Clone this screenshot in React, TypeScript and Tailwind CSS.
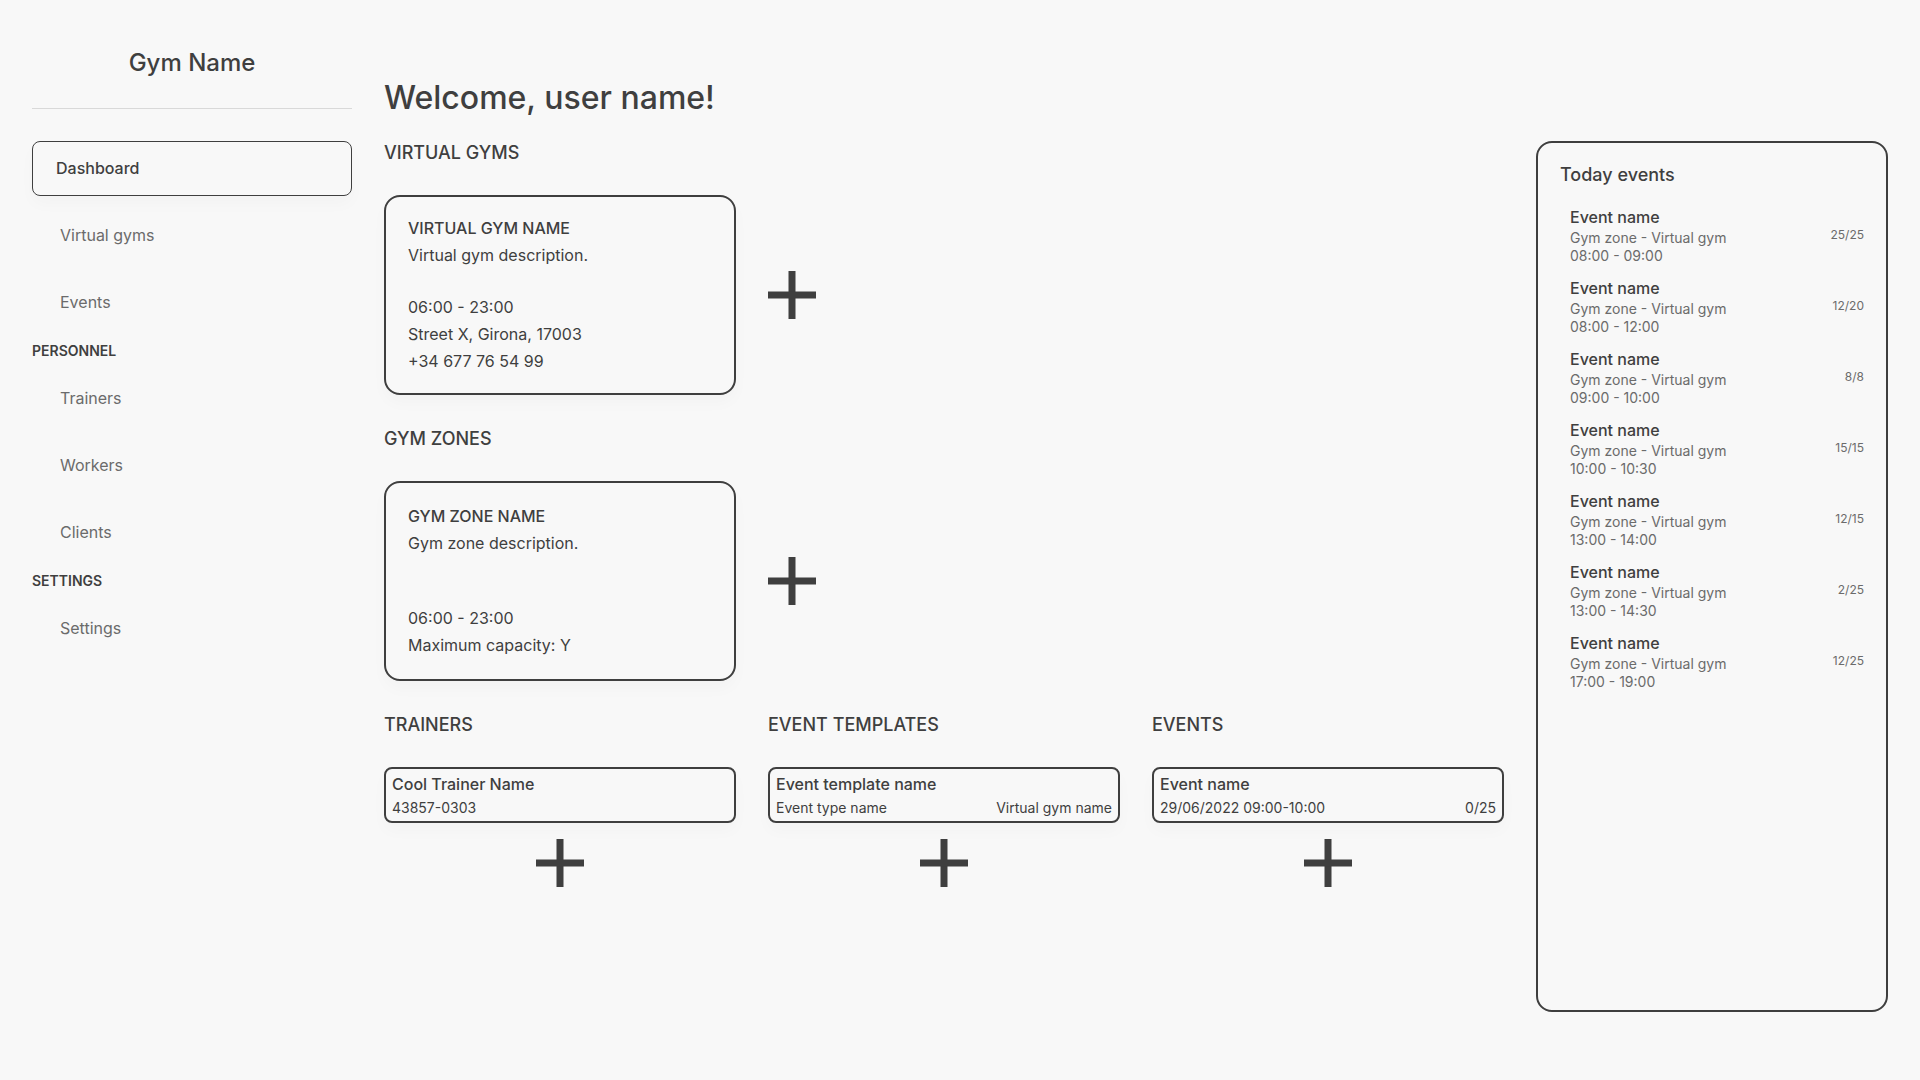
import type { ReactNode } from "react";

const shadow = "shadow-[0_8px_16px_rgba(0,0,0,0.025)]";

function Plus({ label }: { label: string }) {
  return (
    <button type="button" aria-label={label} className="size-12 shrink-0 cursor-pointer">
      <svg viewBox="0 0 48 48" className="size-12" fill="#3f3f3f" aria-hidden="true">
        <rect x="20.5" y="0" width="7" height="48" />
        <rect x="0" y="20.5" width="48" height="7" />
      </svg>
    </button>
  );
}

function NavItem({ children, active = false }: { children: ReactNode; active?: boolean }) {
  return (
    <a
      href="#"
      aria-current={active ? "page" : undefined}
      className={
        active
          ? `flex h-[55px] items-center rounded-lg border border-[#3f3f3f] px-[23px] font-medium ${shadow}`
          : "flex h-[55px] items-center px-7 text-[#6b6b6b]"
      }
    >
      {children}
    </a>
  );
}

function NavHeading({ children }: { children: ReactNode }) {
  return <h2 className="text-sm leading-[17px] font-semibold">{children}</h2>;
}

function SectionTitle({ children }: { children: ReactNode }) {
  return <h2 className="text-lg leading-6 font-medium">{children}</h2>;
}

function InfoCard({
  name,
  description,
  details,
  gap,
}: {
  name: string;
  description: string;
  details: string[];
  gap: string;
}) {
  return (
    <article
      className={`flex min-h-[200px] flex-col justify-center rounded-2xl border-2 border-[#3f3f3f] px-[22px] ${gap} ${shadow}`}
    >
      <div className="flex flex-col gap-2">
        <h3 className="font-medium">{name}</h3>
        <p>{description}</p>
      </div>
      <div className="flex flex-col gap-2">
        {details.map((d) => (
          <p key={d}>{d}</p>
        ))}
      </div>
    </article>
  );
}

function SmallCard({ name, left, right }: { name: string; left: string; right?: string }) {
  return (
    <article
      className={`flex min-h-14 flex-col justify-center gap-[5px] rounded-lg border-2 border-[#3f3f3f] px-1.5 ${shadow}`}
    >
      <h3 className="font-medium">{name}</h3>
      <div className="flex justify-between text-sm leading-[17px]">
        <span>{left}</span>
        {right && <span>{right}</span>}
      </div>
    </article>
  );
}

const columns = [
  { title: "TRAINERS", name: "Cool Trainer Name", left: "43857-0303", add: "Add trainer" },
  {
    title: "EVENT TEMPLATES",
    name: "Event template name",
    left: "Event type name",
    right: "Virtual gym name",
    add: "Add event template",
  },
  { title: "EVENTS", name: "Event name", left: "29/06/2022 09:00-10:00", right: "0/25", add: "Add event" },
];

const today = [
  { time: "08:00 - 09:00", count: "25/25" },
  { time: "08:00 - 12:00", count: "12/20" },
  { time: "09:00 - 10:00", count: "8/8" },
  { time: "10:00 - 10:30", count: "15/15" },
  { time: "13:00 - 14:00", count: "12/15" },
  { time: "13:00 - 14:30", count: "2/25" },
  { time: "17:00 - 19:00", count: "12/25" },
];

export default function App() {
  return (
    <div className="flex min-h-screen gap-8 bg-[#f8f8f8] px-8 font-['Inter',sans-serif] text-base leading-[19px] text-[#3f3f3f]">
      <aside className="flex w-80 shrink-0 flex-col">
        <div className="flex h-[109px] items-center justify-center border-b border-[#d9d9d9] pt-4">
          <p className="text-2xl leading-[29px] font-medium">Gym Name</p>
        </div>
        <nav className="flex flex-col gap-3 pt-8">
          <NavItem active>Dashboard</NavItem>
          <NavItem>Virtual gyms</NavItem>
          <NavItem>Events</NavItem>
          <NavHeading>PERSONNEL</NavHeading>
          <NavItem>Trainers</NavItem>
          <NavItem>Workers</NavItem>
          <NavItem>Clients</NavItem>
          <NavHeading>SETTINGS</NavHeading>
          <NavItem>Settings</NavItem>
        </nav>
      </aside>

      <div className="grid flex-1 grid-cols-4 grid-rows-[auto_1fr] gap-x-8 gap-y-6 pt-[78px] pb-[68px]">
        <h1 className="col-span-4 text-[32px] leading-[39px] font-medium">Welcome, user name!</h1>

        <main className="col-span-3 flex flex-col gap-8">
          <section className="flex flex-col gap-[30px]">
            <SectionTitle>VIRTUAL GYMS</SectionTitle>
            <div className="grid grid-cols-3 items-center gap-8">
              <InfoCard
                name="VIRTUAL GYM NAME"
                description="Virtual gym description."
                details={["06:00 - 23:00", "Street X, Girona, 17003", "+34 677 76 54 99"]}
                gap="gap-[33px]"
              />
              <Plus label="Add virtual gym" />
            </div>
          </section>

          <section className="flex flex-col gap-[30px]">
            <SectionTitle>GYM ZONES</SectionTitle>
            <div className="grid grid-cols-3 items-center gap-8">
              <InfoCard
                name="GYM ZONE NAME"
                description="Gym zone description."
                details={["06:00 - 23:00", "Maximum capacity: Y"]}
                gap="gap-14"
              />
              <Plus label="Add gym zone" />
            </div>
          </section>

          <div className="grid grid-cols-3 gap-8">
            {columns.map((c) => (
              <section key={c.title} className="flex flex-col gap-[30px]">
                <SectionTitle>{c.title}</SectionTitle>
                <div className="flex flex-col gap-4">
                  <SmallCard name={c.name} left={c.left} right={c.right} />
                  <div className="flex justify-center">
                    <Plus label={c.add} />
                  </div>
                </div>
              </section>
            ))}
          </div>
        </main>

        <aside className="flex flex-col gap-[22px] rounded-2xl border-2 border-[#3f3f3f] px-[22px] pt-[21px]">
          <h2 className="text-lg leading-[22px] font-medium">Today events</h2>
          <ul className="flex flex-col gap-3.5 pl-2.5">
            {today.map((e) => (
              <li key={e.time} className="flex items-center justify-between">
                <div className="flex flex-col">
                  <h3 className="mb-0.5 font-medium">Event name</h3>
                  <p className="text-sm leading-[18px] text-[#6b6b6b]">Gym zone - Virtual gym</p>
                  <p className="text-sm leading-[18px] text-[#6b6b6b]">{e.time}</p>
                </div>
                <span className="pb-1 text-xs text-[#6b6b6b]">{e.count}</span>
              </li>
            ))}
          </ul>
        </aside>
      </div>
    </div>
  );
}
